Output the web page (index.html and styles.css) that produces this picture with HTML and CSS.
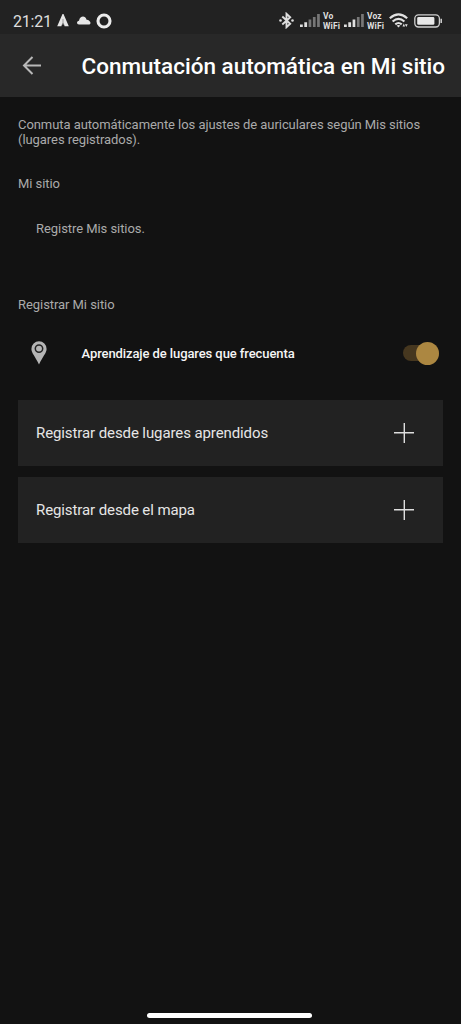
FILE: index.html
```html
<!DOCTYPE html>
<html lang="es">
<head>
<meta charset="utf-8">
<title>Conmutación automática en Mi sitio</title>
<link rel="stylesheet" href="styles.css">
</head>
<body>
<div class="screen">
  <div class="status">
    <div class="status-left">
      <span class="time">21:21</span>
      <svg class="nav" width="12" height="13" viewBox="0 0 12 13"><path fill="#e6e6e6" d="M5.500 0h1L11.800 12.200H7.600L6.800 9.500H5.200L4.400 12.200H.2z"/><path fill="#999" d="M5.500 5h1v6h-1z"/></svg>
      <svg class="cloud" width="14" height="9" viewBox="0 0 14 9"><path fill="#e6e6e6" d="M2 8.400C-.8 8.200-.4 5 2 4.700 3-.3 8.200-.8 9.600 3.700 13 3.800 14.800 7.800 12.500 8.400z"/></svg>
      <svg class="ring" width="16" height="16" viewBox="0 0 16 16"><circle cx="8" cy="8" r="6" fill="none" stroke="#ececec" stroke-width="3.100"/></svg>
    </div>
    <div class="status-right">
      <svg class="bt" width="15" height="17" viewBox="0 0 15 17"><path fill="none" stroke="#dedede" stroke-width="1.900" d="M3.300 4.500 11.200 11.800 7.500 15.200V1.800L11.200 5.200 3.300 12.500"/><circle cx="1.500" cy="8.500" r="1.300" fill="#dedede"/><circle cx="13.500" cy="8.500" r="1.300" fill="#dedede"/></svg>
      <svg class="signal" width="20" height="13" viewBox="0 0 20 13"><path fill="#e0e0e0" d="M0 10.500h2.800V13H0zM4.300 8.300h2.800V13H4.300z"/><path fill="#777" d="M8.600 5.500h2.700V13H8.600zM12.900 3h2.700v10h-2.700zM17.100 0h2.700v13h-2.700z"/></svg>
      <div class="carrier"><span>Vo</span><span>WiFi</span></div>
      <svg class="signal" width="20" height="13" viewBox="0 0 20 13"><path fill="#e0e0e0" d="M0 10.500h2.800V13H0zM4.300 8.300h2.800V13H4.300zM8.600 5.500h2.700V13H8.600z"/><path fill="#777" d="M12.900 3h2.700v10h-2.700zM17.100 0h2.700v13h-2.700z"/></svg>
      <div class="carrier"><span>Voz</span><span>WiFi</span></div>
      <svg class="wifi" width="20" height="15" viewBox="0 0 20 15"><g fill="none" stroke="#e2e2e2" stroke-width="2.100"><path d="M.8 5.300Q9.500-2.500 18.200 5.300M3.600 8.600Q9.500 3 15.400 8.600M6.300 11.400Q9.500 8.600 12.700 11.400"/></g><path fill="#e2e2e2" d="M7.600 12.600Q9.500 11.200 11.400 12.600L9.500 14.500zM13.500 13.500l1.300-3 1.300 3zM15.900 11.200h2.800l-1.400 2.800z"/></svg>
      <svg class="battery" width="29" height="14" viewBox="0 0 29 14"><rect x=".8" y=".8" width="24.600" height="12.200" rx="3.700" fill="none" stroke="#d0d0d0" stroke-width="1.300"/><rect x="3.200" y="3.100" width="17.200" height="7.600" rx="1.300" fill="#e8e8e8"/><path stroke="#ddd" stroke-width="1.400" d="M27.200 4.700v4.400"/></svg>
    </div>
  </div>
  <header class="header">
    <svg class="back" width="20" height="20" viewBox="0 0 20 20"><path fill="none" stroke="#b8b8b8" stroke-width="2" d="M19 9.500H2.200M10.500 1 2 9.500l8.500 8.500"/></svg>
    <h1>Conmutación automática en Mi sitio</h1>
  </header>
  <main>
    <p class="intro">Conmuta automáticamente los ajustes de auriculares según Mis sitios<br>(lugares registrados).</p>
    <h2 class="label mine">Mi sitio</h2>
    <p class="empty">Registre Mis sitios.</p>
    <h2 class="label">Registrar Mi sitio</h2>
    <div class="learning">
      <svg class="pin" width="16" height="24" viewBox="0 0 16 24"><path fill="#b5b5b5" d="M8 .3A7.600 7.600 0 0 0 .4 7.900C.4 12 4.500 15.500 8 23.600 11.500 15.500 15.600 12 15.600 7.900A7.600 7.600 0 0 0 8 .3z"/><circle cx="8" cy="7.600" r="3.700" fill="none" stroke="#242424" stroke-width="1.500"/></svg>
      <span class="learning-text">Aprendizaje de lugares que frecuenta</span>
      <span class="switch"><span class="thumb"></span></span>
    </div>
    <div class="cards">
      <div class="card"><span>Registrar desde lugares aprendidos</span><svg width="20" height="20" viewBox="0 0 20 20"><path stroke="#dedede" stroke-width="1.400" d="M0 9.700h20M10.300 0v20"/></svg></div>
      <div class="card"><span>Registrar desde el mapa</span><svg width="20" height="20" viewBox="0 0 20 20"><path stroke="#dedede" stroke-width="1.400" d="M0 9.700h20M10.300 0v20"/></svg></div>
    </div>
  </main>
  <div class="home"></div>
</div>
</body>
</html>
```
FILE: styles.css
```css
* { box-sizing: border-box; }
body { margin: 0; background: #121212; font-family: Roboto, sans-serif; }
h1, h2, p { margin: 0; font-weight: 400; }
svg { display: block; flex: none; }
.screen { width: 461px; height: 1024px; display: flex; flex-direction: column; background: #121212; overflow: hidden; }
.status { height: 34px; flex: none; display: flex; justify-content: space-between; padding: 6px 18px 0 13px; background: #222; }
.status-left, .status-right { display: flex; align-items: center; height: 29px; }
.time { width: 44px; font-size: 16px; line-height: 20px; color: #dedede; letter-spacing: -.2px; padding-top: 2px; }
.cloud { margin-left: 8px; }
.ring { margin-left: 5px; }
.bt + .signal { margin-left: 6px; }
.carrier { width: 18px; margin-left: 3px; display: flex; flex-direction: column; font-size: 8.500px; line-height: 10px; font-weight: 700; letter-spacing: .1px; color: #dedede; white-space: nowrap; }
.carrier + .signal { margin-left: 3px; }
.wifi { margin-left: 4px; }
.battery { margin-left: 5px; }
.header { height: 63px; flex: none; display: flex; align-items: center; padding-left: 22px; background: #282828; }
h1 { margin-left: 39.500px; font-size: 22.500px; line-height: 28px; font-weight: 500; color: #fff; white-space: nowrap; }
main { flex: 1; padding: 20px 18px 0; }
.intro, .label, .empty { font-size: 13px; line-height: 15px; letter-spacing: -.06px; color: #aaa; white-space: nowrap; }
.mine { margin-top: 29px; }
.empty { padding-left: 18px; margin: 30px 0 61px; }
.learning { height: 24px; margin-top: 29px; display: flex; align-items: center; padding: 0 4px 0 13px; }
.learning-text { margin-left: 34.500px; padding-top: 2px; font-size: 13px; font-weight: 500; letter-spacing: -.09px; line-height: 16px; color: #f5f5f5; white-space: nowrap; }
.switch { margin-left: auto; width: 36px; height: 16px; border-radius: 8px; background: #46371f; display: flex; align-items: center; justify-content: flex-end; }
.thumb { width: 23px; height: 23px; flex: none; border-radius: 50%; background: #ac8741; }
.cards { margin-top: 35px; display: grid; gap: 11px; }
.card { height: 66px; display: flex; align-items: center; justify-content: space-between; padding: 0 29px 0 18px; background: #222; font-size: 15px; letter-spacing: -.1px; color: #e6e6e6; }
.home { width: 165px; height: 5px; border-radius: 2.500px; background: #fff; margin: 0 0 6px 147px; flex: none; }
```
